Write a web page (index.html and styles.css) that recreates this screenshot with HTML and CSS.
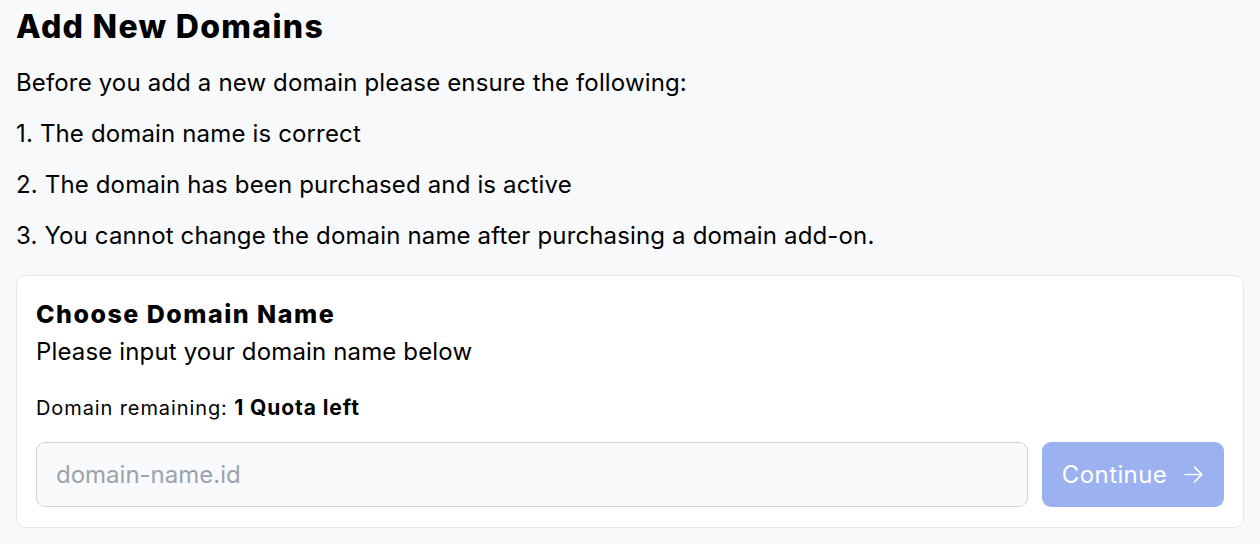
FILE: index.html
```html
<!DOCTYPE html>
<html lang="en">
<head>
<meta charset="utf-8">
<title>Add New Domains</title>
<link rel="stylesheet" href="styles.css">
</head>
<body>
<main class="page">
  <h1 class="title">Add New Domains</h1>
  <p class="line first">Before you add a new domain please ensure the following:</p>
  <p class="line">1. The domain name is correct</p>
  <p class="line">2. The domain has been purchased and is active</p>
  <p class="line">3. You cannot change the domain name after purchasing a domain add-on.</p>
  <section class="card">
    <h2 class="card-title">Choose Domain Name</h2>
    <p class="card-sub">Please input your domain name below</p>
    <p class="quota">Domain remaining: <strong>1 Quota left</strong></p>
    <div class="form-row">
      <input class="domain-input" type="text" placeholder="domain-name.id">
      <button class="continue" type="button">Continue
        <svg class="arrow" viewBox="0 0 20 20" width="21" height="21" fill="none" stroke="currentColor" stroke-width="1.5" stroke-linecap="round" stroke-linejoin="round"><path d="M2 10h16M11 3l7 7-7 7"/></svg>
      </button>
    </div>
  </section>
</main>
</body>
</html>
```
FILE: styles.css
```css
html, body {
  margin: 0;
  padding: 0;
  background: #f8f9fb;
}
body {
  font-family: Inter, "Liberation Sans", sans-serif;
  color: #111;
}
.page {
  padding: 7px 16px 0 16px;
}
.title {
  font-family: Inter, sans-serif;
  font-weight: 800;
  font-size: 32px;
  letter-spacing: 1.3px;
  margin: 0;
  line-height: 40px;
  color: #000;
}
.line {
  margin: 15px 0 0 0;
  font-size: 24px;
  letter-spacing: 0.15px;
  line-height: 36px;
  color: #000;
}
.line.first { margin-top: 18px; }
.card {
  margin-top: 21px;
  background: #fff;
  border: 1px solid #e5e7eb;
  border-radius: 10px;
  padding: 21px 19px 20px 19px;
}
.card-title {
  margin: 0;
  font-weight: 800;
  font-size: 25px;
  letter-spacing: 1.5px;
  line-height: 34px;
  color: #000;
}
.card-sub {
  margin: 3px 0 0 0;
  font-size: 24px;
  letter-spacing: 0.15px;
  line-height: 36px;
  color: #000;
}
.quota {
  margin: 24px 0 0 0;
  font-size: 20px;
  letter-spacing: 0.9px;
  line-height: 28px;
  color: #000;
}
.quota strong { font-weight: 700; font-size: 21px; letter-spacing: 0.9px; }
.form-row {
  margin-top: 20px;
  display: flex;
  gap: 14px;
}
.domain-input {
  flex: 1;
  height: 65px;
  box-sizing: border-box;
  border: 1px solid #d1d5db;
  border-radius: 9px;
  background: #f9fafb;
  padding: 0 19px;
  font-family: Inter, sans-serif;
  font-size: 24px;
  color: #111;
  outline: none;
}
.domain-input::placeholder { color: #9ca3af; }
.continue {
  width: 182px;
  height: 65px;
  border: none;
  border-radius: 9px;
  background: #9cb1f0;
  color: #fff;
  font-family: Inter, sans-serif;
  font-size: 24px;
  letter-spacing: 0.4px;
  display: flex;
  align-items: center;
  justify-content: center;
  gap: 16px;
  padding: 0;
}
.arrow { display: block; }
```
